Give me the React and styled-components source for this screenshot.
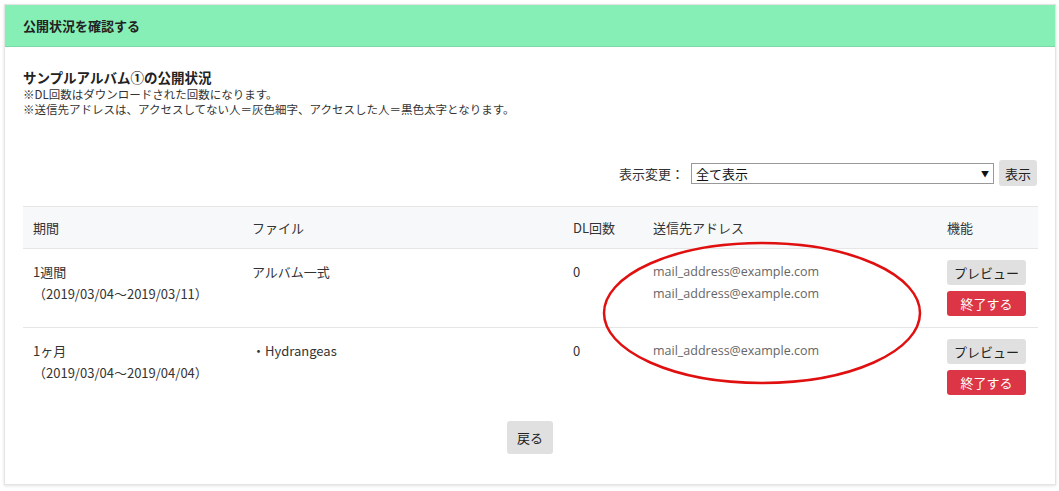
import React from "react"
import styled, { createGlobalStyle } from "styled-components"

const GlobalStyle = createGlobalStyle`
  body {
    margin: 0;
    background: #fff;
    font-family: "Noto Sans CJK JP", "Liberation Sans", sans-serif;
    font-size: 13px;
    color: #333;
  }
`

const Page = styled.div`
  position: relative;
  padding: 4px 3px 4px 4px;
`

const Card = styled.div`
  border: 1px solid #e4e4e4;
  box-shadow: 0 1px 3px rgba(0, 0, 0, 0.12);
  height: 481px;
  box-sizing: border-box;
`

const CardHeader = styled.div`
  background: #86efb5;
  height: 41px;
  display: flex;
  align-items: center;
  padding-left: 18px;
  font-weight: bold;
  font-size: 13px;
  color: #222;
  border-bottom: 1px solid #7ad9a4;
`

const CardBody = styled.div`
  padding: 20px 18px 0 18px;
`

const Title = styled.div`
  font-weight: bold;
  font-size: 13.5px;
  color: #222;
  line-height: 20px;
`

const Note = styled.div`
  font-size: 11.5px;
  line-height: 15px;
  color: #333;
`

const FilterBar = styled.div`
  display: flex;
  justify-content: flex-end;
  align-items: center;
  gap: 5px;
  margin-top: 43px;
  margin-bottom: 20px;
`

const Label = styled.span`
  margin-right: 2px;
`

const Select = styled.div`
  width: 303px;
  height: 21px;
  border: 1px solid #999;
  display: flex;
  align-items: center;
  justify-content: space-between;
  padding: 0 4px;
  box-sizing: border-box;
  font-size: 13px;
  color: #111;
  &::after {
    content: "▼";
    font-size: 8px;
  }
`

const Button = styled.button`
  font-family: inherit;
  font-size: 13px;
  border: none;
  border-radius: 3px;
  background: ${(p) => (p.danger ? "#dc3545" : "#e0e0e0")};
  color: ${(p) => (p.danger ? "#fff" : "#222")};
  padding: 0 ${(p) => (p.wide ? 10 : 6)}px;
  width: ${(p) => (p.w ? `${p.w}px` : "auto")};
  height: ${(p) => p.h || 25}px;
  cursor: pointer;
`

const Table = styled.div`
  display: grid;
  grid-template-columns: 219px 321px 80px 294px 101px;
`

const HeadCell = styled.div`
  background: #f7f8fa;
  height: 41px;
  display: flex;
  align-items: center;
  padding-left: 10px;
  border-top: 1px solid #e6e6e6;
  border-bottom: 1px solid #e6e6e6;
`

const Cell = styled.div`
  height: 79px;
  padding: 12px 10px 0;
  box-sizing: border-box;
  border-bottom: ${(p) => (p.last ? "none" : "1px solid #e6e6e6")};
  line-height: 22px;
  color: ${(p) => (p.muted ? "#666" : "#333")};
  font-family: ${(p) => (p.latin ? '"Open Sans", sans-serif' : "inherit")};
  font-size: ${(p) => (p.latin ? "12.5px" : "13px")};
`

const Actions = styled(Cell)`
  display: flex;
  flex-direction: column;
  align-items: flex-start;
  gap: 6px;
  padding-top: 11px;
`

const Footer = styled.div`
  display: flex;
  justify-content: center;
  margin-top: 14px;
`

const Ring = styled.svg`
  position: absolute;
  left: 600px;
  top: 240px;
  pointer-events: none;
`

const rows = [
  {
    period: "1週間",
    range: "（2019/03/04〜2019/03/11）",
    file: "アルバム一式",
    dl: "0",
    mails: ["mail_address@example.com", "mail_address@example.com"],
  },
  {
    period: "1ヶ月",
    range: "（2019/03/04〜2019/04/04）",
    file: "・Hydrangeas",
    dl: "0",
    mails: ["mail_address@example.com"],
  },
]

export default function App() {
  return (
    <Page>
      <GlobalStyle />
      <Card>
        <CardHeader>公開状況を確認する</CardHeader>
        <CardBody>
          <Title>サンプルアルバム①の公開状況</Title>
          <Note>※DL回数はダウンロードされた回数になります。</Note>
          <Note>※送信先アドレスは、アクセスしてない人＝灰色細字、アクセスした人＝黒色太字となります。</Note>
          <FilterBar>
            <Label>表示変更：</Label>
            <Select>全て表示</Select>
            <Button h={26}>表示</Button>
          </FilterBar>
          <Table>
            <HeadCell>期間</HeadCell>
            <HeadCell>ファイル</HeadCell>
            <HeadCell>DL回数</HeadCell>
            <HeadCell>送信先アドレス</HeadCell>
            <HeadCell>機能</HeadCell>
            {rows.map((r, i) => {
              const last = i === rows.length - 1
              return (
                <React.Fragment key={i}>
                  <Cell last={last}>
                    {r.period}
                    <br />
                    {r.range}
                  </Cell>
                  <Cell last={last}>{r.file}</Cell>
                  <Cell last={last}>{r.dl}</Cell>
                  <Cell last={last} latin muted>
                    {r.mails.map((m, j) => (
                      <div key={j}>{m}</div>
                    ))}
                  </Cell>
                  <Actions last={last}>
                    <Button w={79}>プレビュー</Button>
                    <Button danger w={79}>終了する</Button>
                  </Actions>
                </React.Fragment>
              )
            })}
          </Table>
          <Footer>
            <Button h={33} wide>戻る</Button>
          </Footer>
        </CardBody>
      </Card>
      <Ring width="326" height="146">
        <ellipse cx="162" cy="73" rx="158" ry="70" fill="none" stroke="#e01010" strokeWidth="2.5" />
      </Ring>
    </Page>
  )
}
